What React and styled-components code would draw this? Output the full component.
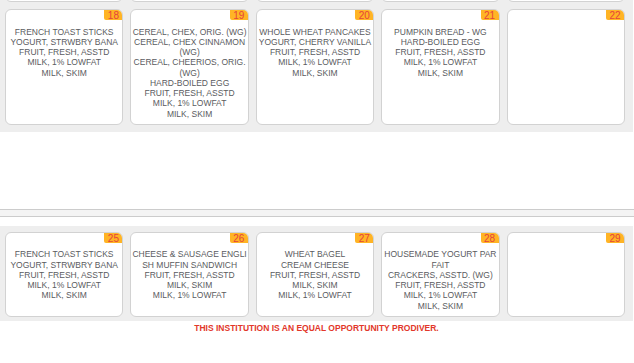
import React from "react";
import styled, { createGlobalStyle } from "styled-components";

const GlobalStyle = createGlobalStyle`
  html, body {
    margin: 0;
    padding: 0;
    background: #fff;
    overflow: hidden;
  }
  body {
    font-family: "Liberation Sans", Arial, sans-serif;
  }
`;

// the row above is scrolled out of view, only its card bottoms show
const hiddenRow = [1, 2, 3, 4, 5].map(k => ({ key: `h${k}`, items: [] }));

const weeks = [
  hiddenRow,
  [
    {
      day: 18,
      items: [
        "FRENCH TOAST STICKS",
        "YOGURT, STRWBRY BANA",
        "FRUIT, FRESH, ASSTD",
        "MILK, 1% LOWFAT",
        "MILK, SKIM",
      ],
    },
    {
      day: 19,
      items: [
        "CEREAL, CHEX, ORIG. (WG)",
        "CEREAL, CHEX CINNAMON",
        "(WG)",
        "CEREAL, CHEERIOS, ORIG.",
        "(WG)",
        "HARD-BOILED EGG",
        "FRUIT, FRESH, ASSTD",
        "MILK, 1% LOWFAT",
        "MILK, SKIM",
      ],
    },
    {
      day: 20,
      items: [
        "WHOLE WHEAT PANCAKES",
        "YOGURT, CHERRY VANILLA",
        "FRUIT, FRESH, ASSTD",
        "MILK, 1% LOWFAT",
        "MILK, SKIM",
      ],
    },
    {
      day: 21,
      items: [
        "PUMPKIN BREAD - WG",
        "HARD-BOILED EGG",
        "FRUIT, FRESH, ASSTD",
        "MILK, 1% LOWFAT",
        "MILK, SKIM",
      ],
    },
    { day: 22, items: [] },
  ],
];

const lastWeek = [
  {
    day: 25,
    items: [
      "FRENCH TOAST STICKS",
      "YOGURT, STRWBRY BANA",
      "FRUIT, FRESH, ASSTD",
      "MILK, 1% LOWFAT",
      "MILK, SKIM",
    ],
  },
  {
    day: 26,
    items: [
      "CHEESE & SAUSAGE ENGLI",
      "SH MUFFIN SANDWICH",
      "FRUIT, FRESH, ASSTD",
      "MILK, SKIM",
      "MILK, 1% LOWFAT",
    ],
  },
  {
    day: 27,
    items: [
      "WHEAT BAGEL",
      "CREAM CHEESE",
      "FRUIT, FRESH, ASSTD",
      "MILK, SKIM",
      "MILK, 1% LOWFAT",
    ],
  },
  {
    day: 28,
    items: [
      "HOUSEMADE YOGURT PAR",
      "FAIT",
      "CRACKERS, ASSTD. (WG)",
      "FRUIT, FRESH, ASSTD",
      "MILK, 1% LOWFAT",
      "MILK, SKIM",
    ],
  },
  { day: 29, items: [] },
];

function DayCard({ day, items, height }) {
  return (
    <Card $height={height}>
      {day && <DayBadge>{day}</DayBadge>}
      {items.map((item, i) => (
        <MenuLine key={i}>{item}</MenuLine>
      ))}
    </Card>
  );
}

function Week({ rows, $top, $bottom, $offset }) {
  return (
    <WeekBlock $top={$top} $bottom={$bottom} $offset={$offset}>
      {rows.map((row, r) => (
        <WeekRow key={r}>
          {row.map(d => (
            <DayCard
              key={d.key || d.day}
              day={d.day}
              items={d.items}
              height={d.key ? 100 : undefined}
            />
          ))}
        </WeekRow>
      ))}
    </WeekBlock>
  );
}

export default function App() {
  return (
    <>
      <GlobalStyle />
      <Page>
        <Week rows={weeks} $top={0} $bottom={7} $offset={-98} />
        <MonthDivider />
        <Week rows={[lastWeek]} $top={6} $bottom={4} />
        <Notice>THIS INSTITUTION IS AN EQUAL OPPORTUNITY PRODIVER.</Notice>
      </Page>
    </>
  );
}

const Page = styled.div`
  width: 634px;
  height: 363px;
  overflow: hidden;
`;

const WeekBlock = styled.div`
  width: 633px;
  box-sizing: border-box;
  background: #eeeeee;
  margin-top: ${p => p.$offset || 0}px;
  padding: ${p => p.$top}px 8px ${p => p.$bottom}px 5px;
  display: flex;
  flex-direction: column;
  gap: 7px;
`;

const WeekRow = styled.div`
  display: grid;
  grid-template-columns: repeat(5, 1fr);
  column-gap: 7px;
`;

const Card = styled.div`
  position: relative;
  box-sizing: border-box;
  height: ${p => (p.$height ? `${p.$height}px` : "auto")};
  background: #fff;
  border: 1px solid #d2d2d2;
  border-radius: 6px;
  padding: 16.5px 1px 5px;
  text-align: center;
  color: #5a5b60;
  font-size: 8.5px;
  line-height: 10.25px;
`;

const DayBadge = styled.div`
  position: absolute;
  top: 0;
  right: 0;
  width: 18px;
  height: 10px;
  background: #ffb425;
  border-radius: 0 5px 0 2px;
  color: #e5433c;
  font-size: 10px;
  line-height: 11px;
  text-align: center;
`;

const MenuLine = styled.div`
  white-space: nowrap;
`;

const MonthDivider = styled.div`
  margin: 77px 0 9px;
  height: 6px;
  background: #f4f4f4;
  border-top: 1px solid #cccccc;
  border-bottom: 1px solid #cccccc;
`;

const Notice = styled.div`
  width: 633px;
  padding-top: 1px;
  text-align: center;
  color: #e2372a;
  font-weight: bold;
  font-size: 8.5px;
  line-height: 12px;
`;
